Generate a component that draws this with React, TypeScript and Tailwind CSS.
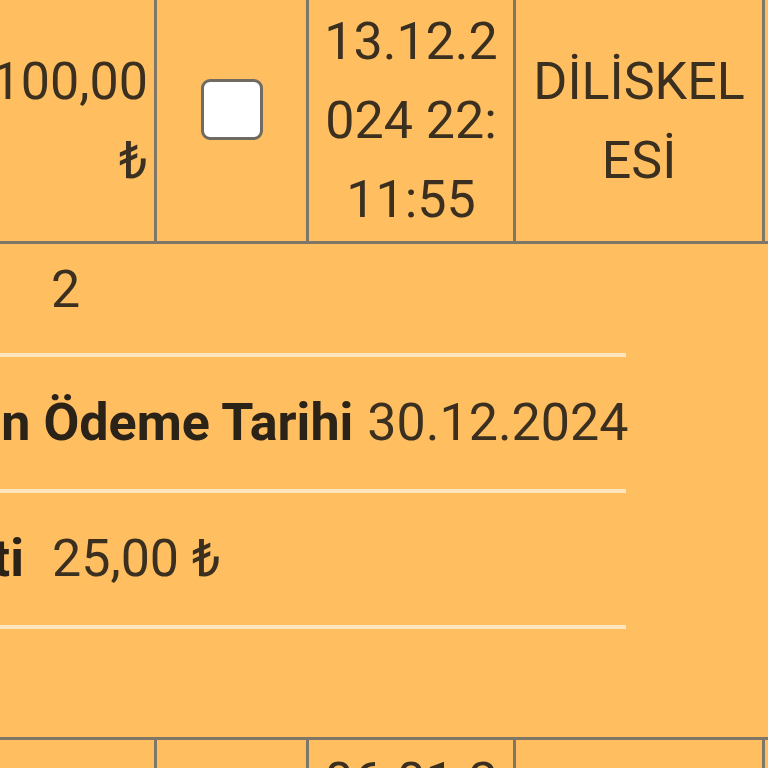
import React from 'react';

const rowBorder = 'border-[#7e7666]';

function Checkbox() {
  return (
    <div className="mb-[22px] h-[61px] w-[62px] rounded-[9px] border-[3px] border-[#6f6a62] bg-white" />
  );
}

function RecordRow({ amount, date, place }: { amount: string; date: string; place: string }) {
  return (
    <div className={`flex h-[244px] border-b-[3px] ${rowBorder}`}>
      <div className={`flex w-[173px] shrink-0 items-center justify-end border-r-[3px] ${rowBorder} pl-[2px] pr-[6px] text-right`}>
        <span>{amount}</span>
      </div>
      <div className={`flex w-[152px] shrink-0 items-center justify-center border-r-[3px] ${rowBorder}`}>
        <Checkbox />
      </div>
      <div className={`flex w-[207px] shrink-0 items-center justify-center border-r-[3px] ${rowBorder} px-[12px] text-center break-all`}>
        <span>{date}</span>
      </div>
      <div className={`flex w-[249px] shrink-0 items-center justify-center border-r-[3px] ${rowBorder} px-[12px] text-center break-all`}>
        <span>{place}</span>
      </div>
      <div className="flex-1" />
    </div>
  );
}

const details = [
  { label: 'Taksit', value: '2', cls: 'pt-[16px] pb-[33px] ml-[-91px] gap-[60px]' },
  { label: 'Son Ödeme Tarihi', value: '30.12.2024', cls: 'py-[36px] gap-[14px]' },
  { label: 'Hizmet Ücreti', value: '25,00 ₺', cls: 'py-[36px] ml-[-236px] gap-[28px]' },
];

export default function App() {
  return (
    <div className="h-[768px] w-[768px] overflow-hidden bg-[#ffbf61] font-['Roboto',sans-serif] text-[52px] leading-[79px] text-[#3b2f20]">
      <div className="ml-[-16px] mt-[-3px] w-[800px] border-t-[3px] border-[#7e7666]">
        <RecordRow amount="100,00 ₺" date="13.12.2024 22:11:55" place="DİLİSKELESİ" />

        <div className={`h-[496px] border-b-[3px] ${rowBorder}`}>
          <div className="ml-[-44px] w-[686px]">
            {details.map((d) => (
              <div key={d.label} className="border-b-[4px] border-[#fde6bf]">
                <div className={`flex leading-[60px] whitespace-nowrap ${d.cls}`}>
                  <span className="font-bold text-[#2b2218]">{d.label}</span>
                  <span>{d.value}</span>
                </div>
              </div>
            ))}
          </div>
        </div>

        <RecordRow amount="100,00 ₺" date="06.01.2025 09:14:27" place="DİLİSKELESİ" />
      </div>
    </div>
  );
}
